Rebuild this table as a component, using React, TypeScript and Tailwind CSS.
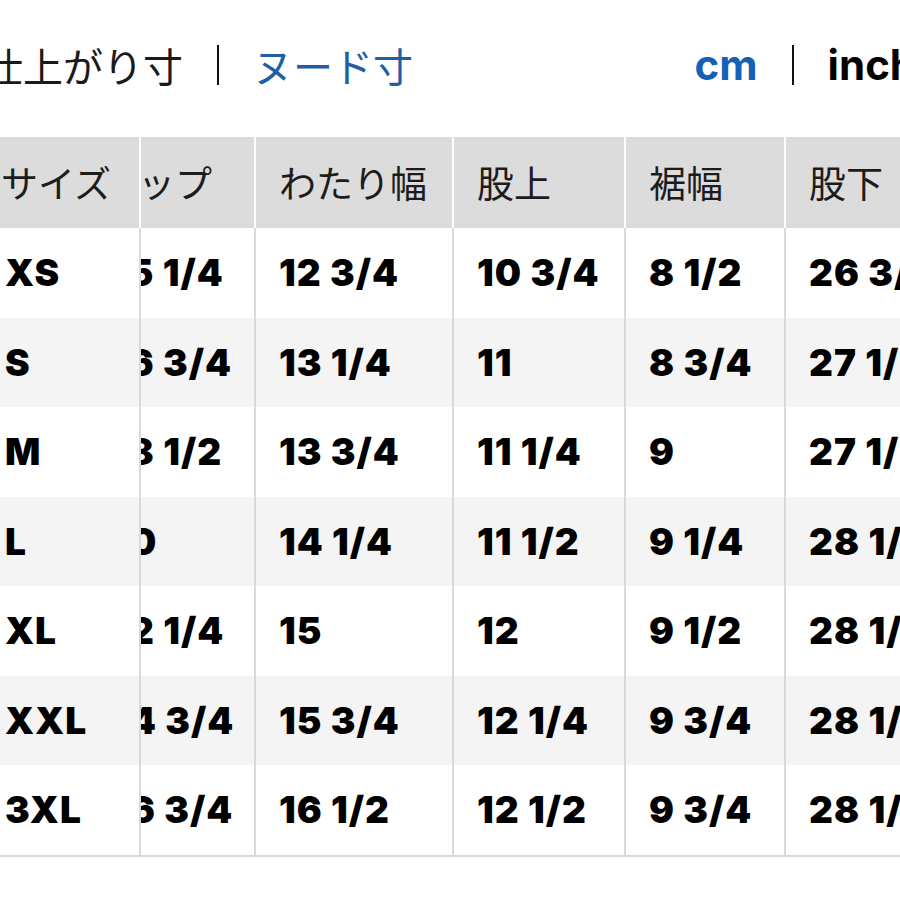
const jp = { fontFamily: '"Noto Sans CJK JP", "Noto Sans", sans-serif' };
const num = { fontFamily: 'Inter, "Liberation Sans", sans-serif' };

const cols = "grid grid-cols-[141px_115px_198px_172px_160px_220px]";

const headers = ["サイズ", "ヒップ", "わたり幅", "股上", "裾幅", "股下"];

const rows = [
  ["XS", "35 1/4", "12 3/4", "10 3/4", "8 1/2", "26 3/4"],
  ["S", "36 3/4", "13 1/4", "11", "8 3/4", "27 1/4"],
  ["M", "38 1/2", "13 3/4", "11 1/4", "9", "27 1/2"],
  ["L", "40", "14 1/4", "11 1/2", "9 1/4", "28 1/4"],
  ["XL", "42 1/4", "15", "12", "9 1/2", "28 1/4"],
  ["XXL", "44 3/4", "15 3/4", "12 1/4", "9 3/4", "28 1/2"],
  ["3XL", "46 3/4", "16 1/2", "12 1/2", "9 3/4", "28 1/2"],
];

function Cell({ i, text, header }: { i: number; text: string; header?: boolean }) {
  const line = header ? "border-white" : "border-[#d9d9d9]";
  const pad = i === 0 ? (header ? "pl-[1px]" : "pl-[5px]") : i === 1 ? "" : "pl-[23px]";
  return (
    <div className={`flex items-center overflow-hidden whitespace-nowrap border-r-2 ${line} ${pad}`}>
      <span className={i === 1 ? (header ? "ml-[-40px]" : "ml-[-38px]") : ""}>{text}</span>
    </div>
  );
}

export default function App() {
  return (
    <div className="w-[900px] h-[900px] overflow-hidden bg-white text-[#111]">
      <div className="h-[130px] flex items-center whitespace-nowrap">
        <div className="flex items-center ml-[-17px] text-[40px] leading-none" style={jp}>
          <span className="text-[#1a1a1a]">仕上がり寸</span>
          <span className="w-[2px] h-[40px] bg-[#111] mx-[34px]" />
          <span className="text-[#1f5fa8]">ヌード寸</span>
        </div>
        <div className="flex items-center ml-auto mr-[-16px] text-[42px] font-bold leading-none" style={num}>
          <span className="text-[#1561b8]">cm</span>
          <span className="w-[2px] h-[40px] bg-[#111] mx-[34px]" />
          <span className="text-black">inch</span>
        </div>
      </div>
      <div className="mt-[7px]">
        <div className={`${cols} h-[91px] bg-[#dcdcdc] text-[37px] text-[#1c1c1c]`} style={jp}>
          {headers.map((h, i) => (
            <Cell key={i} i={i} text={h} header />
          ))}
        </div>
        {rows.map((r, ri) => (
          <div
            key={ri}
            className={`${cols} h-[89.5px] text-[37px] font-black tracking-[1px] text-black ${ri % 2 === 1 ? "bg-[#f4f4f4]" : "bg-white"}`}
            style={num}
          >
            {r.map((v, i) => (
              <Cell key={i} i={i} text={v} />
            ))}
          </div>
        ))}
        <div className="h-[2px] bg-[#d9d9d9]" />
      </div>
    </div>
  );
}
